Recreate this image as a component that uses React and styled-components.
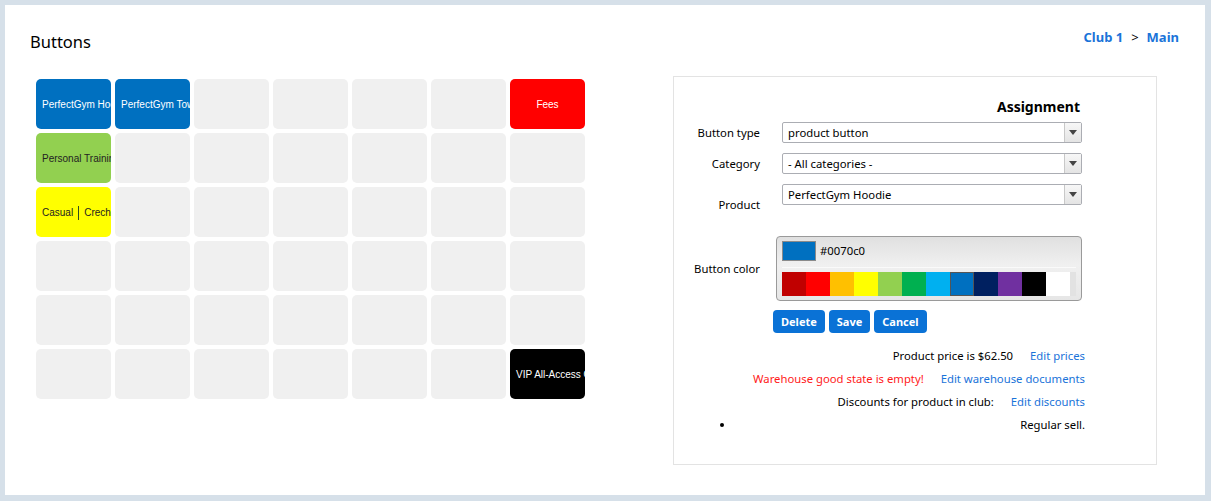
import React from 'react';
import styled, { createGlobalStyle } from 'styled-components';

const GlobalStyle = createGlobalStyle`
  html, body {
    margin: 0;
    padding: 0;
    background: #d6e0e9;
  }
  * {
    box-sizing: border-box;
  }
`;

const uiFont = `"Noto Sans", "Segoe UI", sans-serif`;

const cells = [
  { row: 0, col: 0, label: 'PerfectGym Hoodie', bg: '#0070c0', color: '#fff' },
  { row: 0, col: 1, label: 'PerfectGym Towel', bg: '#0070c0', color: '#fff' },
  { row: 0, col: 6, label: 'Fees', bg: '#ff0000', color: '#fff', center: true },
  { row: 1, col: 0, label: 'Personal Training', bg: '#92d050', color: '#222' },
  { row: 2, col: 0, label: 'casual', bg: '#ffff00', color: '#222' },
  { row: 5, col: 6, label: 'VIP All-Access Card', bg: '#000', color: '#fff' },
];

const palette = [
  '#c00000',
  '#ff0000',
  '#ffc000',
  '#ffff00',
  '#92d050',
  '#00b050',
  '#00b0f0',
  '#0070c0',
  '#002060',
  '#7030a0',
  '#000000',
  '#ffffff',
];

function Select({ value }) {
  return (
    <SelectBox>
      <SelectValue>{value}</SelectValue>
      <SelectArrow>
        <svg width="8" height="5" viewBox="0 0 8 5">
          <path d="M0 0 L8 0 L4 5 Z" fill="#444" />
        </svg>
      </SelectArrow>
    </SelectBox>
  );
}

export default function App() {
  const grid = [];
  for (let r = 0; r < 6; r++) {
    for (let c = 0; c < 7; c++) {
      const cell = cells.find((x) => x.row === r && x.col === c);
      grid.push(
        <Cell key={`${r}-${c}`} $bg={cell ? cell.bg : '#f0f0f0'} $color={cell ? cell.color : '#000'} $center={cell && cell.center}>
          {cell && cell.label === 'casual' ? (
            <>
              Casual <Pipe /> Creche
            </>
          ) : (
            cell && cell.label
          )}
        </Cell>
      );
    }
  }

  return (
    <>
      <GlobalStyle />
      <Page>
        <Card>
          <Header>
            <Title>Buttons</Title>
            <Crumbs>
              <CrumbLink>Club 1</CrumbLink>
              <CrumbSep>&gt;</CrumbSep>
              <CrumbLink>Main</CrumbLink>
            </Crumbs>
          </Header>
          <Body>
            <Grid>{grid}</Grid>
            <Panel>
              <Heading>Assignment</Heading>
              <Form>
                <Label>Button type</Label>
                <Control $offset={9}>
                  <Select value="product button" />
                </Control>
                <Label>Category</Label>
                <Control $offset={9}>
                  <Select value="- All categories -" />
                </Control>
                <Label>Product</Label>
                <Control $offset={9} $tall>
                  <Select value="PerfectGym Hoodie" />
                </Control>
                <Label>Button color</Label>
                <Control $offset={3}>
                  <Picker>
                    <PickerTop>
                      <Current />
                      <HexText>#0070c0</HexText>
                    </PickerTop>
                    <Swatches>
                      {palette.map((p) => (
                        <Swatch key={p} $color={p} $active={p === '#0070c0'} />
                      ))}
                    </Swatches>
                  </Picker>
                </Control>
                <span />
                <Actions>
                  <ActionButton>Delete</ActionButton>
                  <ActionButton>Save</ActionButton>
                  <ActionButton>Cancel</ActionButton>
                </Actions>
              </Form>
              <Info>
                <InfoLine>
                  <span>Product price is $62.50</span>
                  <InfoLink>Edit prices</InfoLink>
                </InfoLine>
                <InfoLine>
                  <Warning>Warehouse good state is empty!</Warning>
                  <InfoLink>Edit warehouse documents</InfoLink>
                </InfoLine>
                <InfoLine>
                  <span>Discounts for product in club:</span>
                  <InfoLink>Edit discounts</InfoLink>
                </InfoLine>
                <Bullets>
                  <li>Regular sell.</li>
                </Bullets>
              </Info>
            </Panel>
          </Body>
        </Card>
      </Page>
    </>
  );
}

const Page = styled.div`
  padding: 5px;
  height: 501px;
`;

const Card = styled.div`
  background: #fff;
  width: 1200px;
  height: 490px;
  padding: 0 26px 0 25px;
`;

const Header = styled.div`
  height: 71px;
  display: flex;
  justify-content: space-between;
  align-items: flex-start;
`;

const Title = styled.h1`
  margin: 25px 0 0;
  font-family: ${uiFont};
  font-weight: 400;
  font-size: 16.5px;
  line-height: 24px;
  color: #000;
`;

const Crumbs = styled.div`
  margin-top: 23px;
  display: flex;
  align-items: center;
  font-family: ${uiFont};
  font-size: 13px;
  line-height: 18px;
`;

const CrumbLink = styled.a`
  color: #1a73d9;
  font-weight: 700;
`;

const CrumbSep = styled.span`
  margin: 0 8px;
  color: #000;
`;

const Body = styled.div`
  display: flex;
  justify-content: space-between;
  align-items: flex-start;
`;

const Grid = styled.div`
  margin: 3px 0 0 6px;
  display: grid;
  grid-template-columns: repeat(7, 75px);
  grid-auto-rows: 50px;
  gap: 4px;
`;

const Cell = styled.div`
  background: ${(p) => p.$bg};
  color: ${(p) => p.$color};
  border-radius: 5px;
  overflow: hidden;
  white-space: nowrap;
  line-height: 51px;
  text-align: ${(p) => (p.$center ? 'center' : 'left')};
  padding: 0 0 0 ${(p) => (p.$center ? '0' : '6px')};
  font-family: "Liberation Sans", Arial, sans-serif;
  font-size: 10px;
`;

const Pipe = styled.span`
  display: inline-block;
  width: 1.5px;
  height: 14px;
  background: #2f4f1f;
  margin: 0 2px;
  vertical-align: middle;
`;

const Panel = styled.div`
  margin-right: 22px;
  width: 484px;
  height: 389px;
  border: 1px solid #e3e3e3;
  padding: 21px 74px 0 0;
  font-family: ${uiFont};
  font-size: 11.3px;
  color: #000;
`;

const Heading = styled.div`
  text-align: right;
  font-weight: 700;
  font-size: 14px;
  line-height: 18px;
  padding-right: 2px;
  margin-bottom: 6px;
`;

const Form = styled.div`
  display: grid;
  grid-template-columns: 86px 1fr;
  column-gap: 13px;
  row-gap: 10px;
`;

const Label = styled.div`
  text-align: right;
  align-self: center;
  line-height: 16px;
`;

const Control = styled.div`
  padding-left: ${(p) => p.$offset}px;
  height: ${(p) => (p.$tall ? '42px' : 'auto')};
`;

const SelectBox = styled.div`
  height: 21px;
  border: 1px solid #abadb3;
  border-radius: 2px;
  display: flex;
  background: #fff;
`;

const SelectValue = styled.div`
  flex: 1;
  padding-left: 5px;
  line-height: 19px;
`;

const SelectArrow = styled.div`
  width: 17px;
  border-left: 1px solid #c8c8c8;
  background: linear-gradient(#f7f7f7, #e4e4e4);
  display: flex;
  align-items: center;
  justify-content: center;
`;

const Picker = styled.div`
  height: 65px;
  border: 1px solid #9a9a9a;
  border-radius: 4px;
  background: linear-gradient(#e0e0e0, #f0f0f0 45%, #e6e6e6);
  padding: 4px 5px 0 5px;
`;

const PickerTop = styled.div`
  display: flex;
  align-items: flex-start;
  height: 27px;
  border-bottom: 1px solid #fafafa;
`;

const Current = styled.div`
  width: 34px;
  height: 20px;
  background: #0070c0;
  border: 1px solid #8a8a8a;
`;

const HexText = styled.span`
  margin-left: 4px;
  line-height: 20px;
`;

const Swatches = styled.div`
  margin-top: 4px;
  display: flex;
  height: 24px;
  background: #e2e2e2;
`;

const Swatch = styled.div`
  width: 24px;
  height: 24px;
  background: ${(p) => p.$color};
  border: ${(p) => (p.$active ? '1px solid #555' : 'none')};
`;

const Actions = styled.div`
  display: flex;
  gap: 4px;
  margin-top: -1px;
`;

const ActionButton = styled.button`
  height: 23px;
  padding: 0 8px;
  border: none;
  border-radius: 4px;
  background: #0a72d6;
  color: #fff;
  font-family: ${uiFont};
  font-weight: 700;
  font-size: 11px;
`;

const Info = styled.div`
  margin: 11px -3px 0 0;
`;

const InfoLine = styled.div`
  display: flex;
  justify-content: flex-end;
  gap: 17px;
  line-height: 23px;
`;

const InfoLink = styled.a`
  color: #1a73d9;
`;

const Warning = styled.span`
  color: #ff1a1a;
`;

const Bullets = styled.ul`
  margin: 0;
  padding: 0 0 0 61px;
  line-height: 23px;
  text-align: right;
`;
